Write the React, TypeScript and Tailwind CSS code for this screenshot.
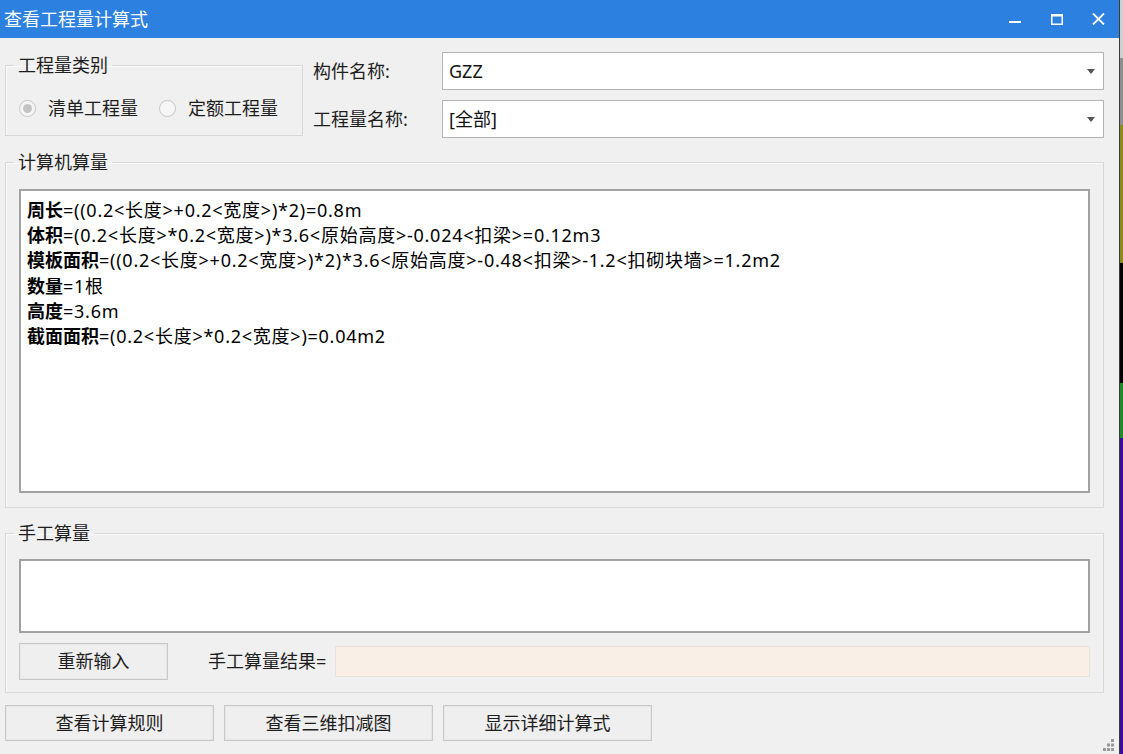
import React from 'react';

const FONT = "font-['Noto_Sans','Noto_Sans_CJK_SC',sans-serif]";

const formulas: [string, string][] = [
  ['周长', '=((0.2<长度>+0.2<宽度>)*2)=0.8m'],
  ['体积', '=(0.2<长度>*0.2<宽度>)*3.6<原始高度>-0.024<扣梁>=0.12m3'],
  ['模板面积', '=((0.2<长度>+0.2<宽度>)*2)*3.6<原始高度>-0.48<扣梁>-1.2<扣砌块墙>=1.2m2'],
  ['数量', '=1根'],
  ['高度', '=3.6m'],
  ['截面面积', '=(0.2<长度>*0.2<宽度>)=0.04m2'],
];

function Combo({ value }: { value: string }) {
  return (
    <div className="h-[38px] flex-1 flex items-center justify-between bg-white border border-[#b4b4b4] pl-[6px] pr-[8px]">
      <span className="text-[18px] text-[#111]">{value}</span>
      <svg width="8" height="5" viewBox="0 0 8 5">
        <polygon points="0,0 8,0 4,5" fill="#555" />
      </svg>
    </div>
  );
}

function Radio({ label, checked }: { label: string; checked?: boolean }) {
  return (
    <div className="flex items-center gap-[12px]">
      <span className="w-[17px] h-[17px] rounded-full border border-[#c6c6c6] bg-[#f6f6f6] flex items-center justify-center">
        {checked && <span className="w-[9px] h-[9px] rounded-full bg-[#c4c4c4]" />}
      </span>
      <span className="text-[18px] leading-[20px] text-[#1e1e1e]">{label}</span>
    </div>
  );
}

function Button({ label, className }: { label: string; className: string }) {
  return (
    <button className={`bg-[#efefef] border border-[#c8c8c8] shadow-[inset_0_0_0_1px_#e6e6e6] text-[18px] text-[#1e1e1e] ${className}`}>
      {label}
    </button>
  );
}

export default function App() {
  return (
    <div className={`flex w-[1123px] h-[754px] overflow-hidden ${FONT}`}>
      {/* dialog window */}
      <div className="relative w-[1119px] h-[754px] bg-[#f0f0f0] flex flex-col">
        <div className="h-[38px] bg-[#2b80e0] flex items-center">
          <span className="pl-[4px] text-[18px] text-white">查看工程量计算式</span>
          <div className="ml-auto flex h-full">
            <div className="w-[42px] flex items-center justify-center">
              <span className="block w-[12px] h-[2px] bg-white mt-[6px]" />
            </div>
            <div className="w-[42px] flex items-center justify-center">
              <svg width="12" height="11" viewBox="0 0 12 11">
                <rect x="0.75" y="1" width="10.5" height="9.25" fill="none" stroke="white" strokeWidth="1.5" />
                <rect x="0" y="0" width="12" height="2.5" fill="white" />
              </svg>
            </div>
            <div className="w-[41px] flex items-center justify-center">
              <svg width="13" height="12" viewBox="0 0 13 12">
                <path d="M1 0.5 L12 11.5 M12 0.5 L1 11.5" stroke="white" strokeWidth="1.8" />
              </svg>
            </div>
          </div>
        </div>

        <div className="flex flex-col pl-[5px] pr-[15px]">
          {/* top row */}
          <div className="flex items-start pt-[14px]">
            <fieldset className="mt-[4px] w-[298px] border border-[#d8d8d8] shadow-[inset_1px_1px_0_#fbfbfb] px-[13px] pt-[24px] pb-[17px]">
              <legend className="-ml-[5px] px-[4px] text-[18px] leading-[18px] text-[#1e1e1e]">工程量类别</legend>
              <div className="flex items-center gap-[21px]">
                <Radio label="清单工程量" checked />
                <Radio label="定额工程量" />
              </div>
            </fieldset>
            <div className="ml-[10px] flex-1 flex flex-col gap-[10px]">
              <div className="flex items-center">
                <span className="w-[129px] text-[18px] text-[#1e1e1e]">构件名称:</span>
                <Combo value="GZZ" />
              </div>
              <div className="flex items-center">
                <span className="w-[129px] text-[18px] text-[#1e1e1e]">工程量名称:</span>
                <Combo value="[全部]" />
              </div>
            </div>
          </div>

          {/* computed quantities */}
          <fieldset className="mt-[15px] border border-[#d8d8d8] shadow-[inset_1px_1px_0_#fbfbfb] pl-[13px] pr-[13px] pt-[18px] pb-[14px]">
            <legend className="-ml-[5px] px-[4px] text-[18px] leading-[18px] text-[#1e1e1e]">计算机算量</legend>
            <div className="h-[304px] bg-white border-2 border-[#a2a2a2] pl-[6px] pt-[7px]">
              {formulas.map(([name, expr]) => (
                <div key={name} className="text-[18px] leading-[25.2px] text-black whitespace-nowrap">
                  <span className="font-bold">{name}</span>
                  <span className="tracking-[0.75px]">{expr}</span>
                </div>
              ))}
            </div>
          </fieldset>

          {/* manual quantities */}
          <fieldset className="mt-[16px] border border-[#d8d8d8] shadow-[inset_1px_1px_0_#fbfbfb] pl-[13px] pr-[13px] pt-[17px] pb-[12px]">
            <legend className="-ml-[5px] px-[4px] text-[18px] leading-[18px] text-[#1e1e1e]">手工算量</legend>
            <div className="h-[74px] bg-white border-2 border-[#a2a2a2]" />
            <div className="mt-[10px] flex items-center">
              <Button label="重新输入" className="w-[149px] h-[37px]" />
              <span className="ml-[40px] text-[18px] text-[#1e1e1e]">手工算量结果=</span>
              <div className="ml-[9px] flex-1 h-[31px] bg-[#f9efe6] border border-[#e8e2dc]" />
            </div>
          </fieldset>

          {/* bottom buttons */}
          <div className="mt-[12px] flex gap-[10px]">
            <Button label="查看计算规则" className="w-[209px] h-[36px]" />
            <Button label="查看三维扣减图" className="w-[209px] h-[36px]" />
            <Button label="显示详细计算式" className="w-[209px] h-[36px]" />
          </div>
        </div>

        {/* size grip */}
        <svg className="absolute right-[4px] bottom-[2px]" width="14" height="14" viewBox="0 0 14 14">
          <rect x="10" y="1" width="3" height="3" fill="#9a9a9a" />
          <rect x="6" y="5.5" width="3" height="3" fill="#9a9a9a" />
          <rect x="10" y="5.5" width="3" height="3" fill="#9a9a9a" />
          <rect x="2" y="10" width="3" height="3" fill="#9a9a9a" />
          <rect x="6" y="10" width="3" height="3" fill="#9a9a9a" />
          <rect x="10" y="10" width="3" height="3" fill="#9a9a9a" />
        </svg>
      </div>

      {/* desktop behind, visible at the right edge */}
      <div className="w-[4px] h-[754px] flex flex-col border-l border-[#3a3a3a]">
        <div className="h-[58px] bg-[#cfcfcf]" />
        <div className="h-[67px] bg-[#8e8e8e]" />
        <div className="h-[138px] bg-[#8c8a1c]" />
        <div className="h-[120px] bg-black" />
        <div className="h-[55px] bg-[#1f8a2a]" />
        <div className="flex-1 bg-[#3b0c9c]" />
      </div>
    </div>
  );
}
